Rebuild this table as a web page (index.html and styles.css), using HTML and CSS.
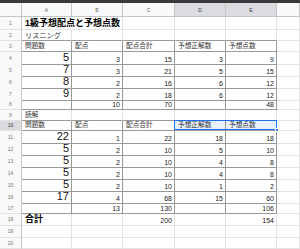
FILE: index.html
```html
<!DOCTYPE html>
<html lang="ja">
<head>
<meta charset="utf-8">
<title>1級予想配点と予想点数</title>
<link rel="stylesheet" href="styles.css">
</head>
<body>
<div class="topbar"></div>
<div class="sheet">
  <div class="row hdr">
    <div class="corner"></div>
    <div class="ch">A</div><div class="ch">B</div><div class="ch">C</div>
    <div class="ch on">D</div><div class="ch on">E</div><div class="ch"></div>
  </div>

  <div class="row r12 rtall">
    <div class="rh">1</div>
    <div class="c title nb">1級予想配点と予想点数</div>
    <div class="c"></div><div class="c"></div><div class="c"></div><div class="c"></div><div class="c"></div>
  </div>
  <div class="row r11">
    <div class="rh">2</div>
    <div class="c sec tb">リスニング</div>
    <div class="c tb"></div><div class="c tb"></div><div class="c tb"></div><div class="c tb"></div><div class="c"></div>
  </div>
  <div class="row r10">
    <div class="rh">3</div>
    <div class="c t h">問題数</div><div class="c t h">配点</div><div class="c t h">配点合計</div><div class="c t h">予想正解数</div><div class="c t h">予想点数</div><div class="c"></div>
  </div>
  <div class="row r12">
    <div class="rh">4</div>
    <div class="c t n big">5</div><div class="c t n">3</div><div class="c t n">15</div><div class="c t n">3</div><div class="c t n">9</div><div class="c"></div>
  </div>
  <div class="row r12">
    <div class="rh">5</div>
    <div class="c t n big">7</div><div class="c t n">3</div><div class="c t n">21</div><div class="c t n">5</div><div class="c t n">15</div><div class="c"></div>
  </div>
  <div class="row r12">
    <div class="rh">6</div>
    <div class="c t n big">8</div><div class="c t n">2</div><div class="c t n">16</div><div class="c t n">6</div><div class="c t n">12</div><div class="c"></div>
  </div>
  <div class="row r12">
    <div class="rh">7</div>
    <div class="c t n big">9</div><div class="c t n">2</div><div class="c t n">18</div><div class="c t n">6</div><div class="c t n">12</div><div class="c"></div>
  </div>
  <div class="row r10">
    <div class="rh">8</div>
    <div class="c t"></div><div class="c t n">10</div><div class="c t n">70</div><div class="c t"></div><div class="c t n">48</div><div class="c"></div>
  </div>
  <div class="row r10">
    <div class="rh">9</div>
    <div class="c h tb">読解</div>
    <div class="c tb"></div><div class="c tb"></div><div class="c tb"></div><div class="c tb"></div><div class="c"></div>
  </div>
  <div class="row r10">
    <div class="rh on">10</div>
    <div class="c t h">問題数</div><div class="c t h">配点</div><div class="c t h">配点合計</div>
    <div class="c t h sel anchor">予想正解数<span class="selbox"><span class="handle"></span></span></div>
    <div class="c t h sel">予想点数</div><div class="c"></div>
  </div>
  <div class="row r12">
    <div class="rh">11</div>
    <div class="c t n big">22</div><div class="c t n">1</div><div class="c t n">22</div><div class="c t n">18</div><div class="c t n">18</div><div class="c"></div>
  </div>
  <div class="row r12">
    <div class="rh">12</div>
    <div class="c t n big">5</div><div class="c t n">2</div><div class="c t n">10</div><div class="c t n">5</div><div class="c t n">10</div><div class="c"></div>
  </div>
  <div class="row r12">
    <div class="rh">13</div>
    <div class="c t n big">5</div><div class="c t n">2</div><div class="c t n">10</div><div class="c t n">4</div><div class="c t n">8</div><div class="c"></div>
  </div>
  <div class="row r12">
    <div class="rh">14</div>
    <div class="c t n big">5</div><div class="c t n">2</div><div class="c t n">10</div><div class="c t n">4</div><div class="c t n">8</div><div class="c"></div>
  </div>
  <div class="row r12">
    <div class="rh">15</div>
    <div class="c t n big">5</div><div class="c t n">2</div><div class="c t n">10</div><div class="c t n">1</div><div class="c t n">2</div><div class="c"></div>
  </div>
  <div class="row r12">
    <div class="rh">16</div>
    <div class="c t n big">17</div><div class="c t n">4</div><div class="c t n">68</div><div class="c t n">15</div><div class="c t n">60</div><div class="c"></div>
  </div>
  <div class="row r10">
    <div class="rh">17</div>
    <div class="c t"></div><div class="c t n">13</div><div class="c t n">130</div><div class="c t"></div><div class="c t n">106</div><div class="c"></div>
  </div>
  <div class="row r12 rtall">
    <div class="rh">18</div>
    <div class="c title">合計</div><div class="c"></div><div class="c n">200</div><div class="c"></div><div class="c n">154</div><div class="c"></div>
  </div>
  <div class="row r11">
    <div class="rh">19</div>
    <div class="c"></div><div class="c"></div><div class="c"></div><div class="c"></div><div class="c"></div><div class="c"></div>
  </div>
  <div class="row r11">
    <div class="rh">20</div>
    <div class="c"></div><div class="c"></div><div class="c"></div><div class="c"></div><div class="c"></div><div class="c"></div>
  </div>
</div>
</body>
</html>
```

FILE: styles.css
```css
* { box-sizing: border-box; }

html, body {
  margin: 0;
  padding: 0;
  background: #ffffff;
  overflow: hidden;
}

body {
  width: 300px;
  height: 249px;
  font-family: "Liberation Sans", "Noto Sans CJK JP", sans-serif;
  color: #222;
}

.topbar {
  height: 3px;
  background: #3a3a3a;
}

.sheet {
  display: flex;
  flex-direction: column;
}

.row {
  display: grid;
  grid-template-columns: 22px 50px 51px 52px 51px 51px 1fr;
}

.hdr { height: 14px; }
.r12 { height: 12px; }
.r11 { height: 11.5px; }
.r10 { height: 10.5px; }
.row.rtall { height: 12.5px; }

.corner,
.ch {
  background: #f8f9fa;
  border-right: 1px solid #c4c7c5;
  border-bottom: 1px solid #c4c7c5;
}

.ch {
  display: flex;
  align-items: center;
  justify-content: center;
  font-size: 5px;
  color: #666;
}

.ch.on,
.rh.on {
  background: #dadce0;
  color: #333;
}

.rh {
  background: #f8f9fa;
  border-right: 1px solid #c4c7c5;
  border-bottom: 1px solid #e2e3e3;
  display: flex;
  align-items: center;
  justify-content: center;
  font-size: 5px;
  color: #777;
}

.c {
  border-right: 1px solid #e2e3e3;
  border-bottom: 1px solid #e2e3e3;
  display: flex;
  align-items: flex-end;
  padding: 0 2px 1px 3px;
  font-size: 7px;
  line-height: 1;
  white-space: nowrap;
  color: #222;
}

.c.nb { border-right-color: transparent; }

.t {
  border-right-color: #999;
  border-bottom-color: #999;
}

.tb { border-bottom-color: #999; }

.n {
  justify-content: flex-end;
  padding-right: 2px;
}

.big {
  font-size: 11px;
  color: #111;
}

.h {
  font-size: 6.7px;
  color: #333;
}

.sec {
  font-size: 7.2px;
  color: #333;
}

.title {
  font-size: 9px;
  font-weight: bold;
  color: #000;
  padding-bottom: 1px;
}

.sel {
  background: #e8f0fe;
}

.anchor { position: relative; }

.selbox {
  position: absolute;
  top: -1px;
  left: -1px;
  bottom: 0;
  width: 103px;
  border: 1px solid #1a73e8;
  z-index: 2;
  pointer-events: none;
}

.handle {
  position: absolute;
  right: -3px;
  bottom: -3px;
  width: 4px;
  height: 4px;
  background: #1a73e8;
  border: 1px solid #fff;
}
```
